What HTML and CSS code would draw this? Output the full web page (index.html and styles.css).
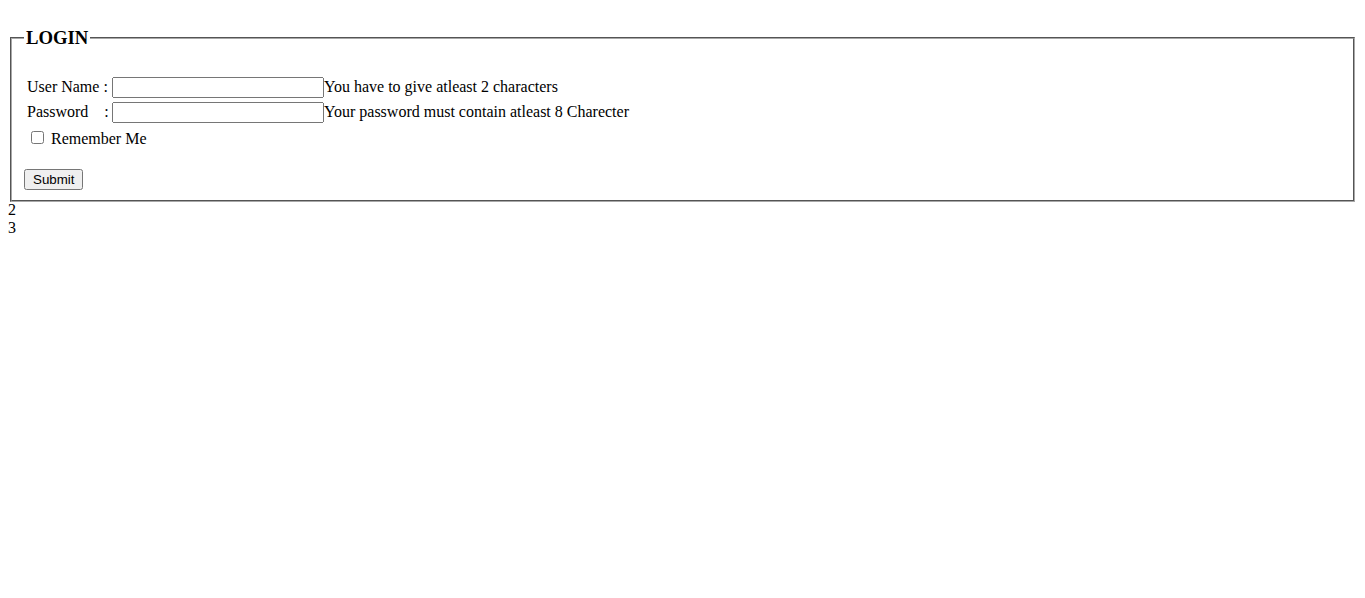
FILE: index.html
```html
<!DOCTYPE html>
<html>
<head>
<meta charset="utf-8">
<link rel="stylesheet" href="styles.css">
</head>
<body>
<form class="login-form">
<fieldset class="login">
<legend class="login-legend"><h3 class="login-title">LOGIN</h3></legend>
<table class="login-table">
<tr><td><span class="label">User Name :</span><input type="text" class="field">You have to give atleast 2 characters</td></tr>
<tr><td><span class="label">Password &nbsp;&nbsp;&nbsp;:</span><input type="password" class="field">Your password must contain atleast 8 Charecter</td></tr>
<tr><td class="check-cell"><input type="checkbox" class="check"> Remember Me</td></tr>
</table>
<div class="actions"><input type="submit" value="Submit" class="submit"></div>
</fieldset>
</form>
<div class="after">2<br>3</div>
</body>
</html>
```
FILE: styles.css
```css
body {
  font-family: "Liberation Serif", "Times New Roman", serif;
  font-size: 16px;
}
.login-form {
  margin: 0;
}
.login {
  border: 2px groove #a8a8a8;
  padding-bottom: 10px;
}
.login-title {
  font-size: 18.72px;
}
.login-table {
  margin-top: 1px;
}
.label {
  display: inline-block;
  width: 85px;
  white-space: pre;
}
.field {
  width: 212px;
  box-sizing: border-box;
  font-family: "Liberation Sans", Arial, sans-serif;
  font-size: 13.333px;
}
.check-cell {
  padding-top: 2px;
}
.check {
  width: 13px;
  height: 13px;
}
.actions {
  margin-top: 18px;
}
.submit {
  display: block;
  height: 21px;
  padding: 1px 7px;
  font-family: "Liberation Sans", Arial, sans-serif;
  font-size: 13.333px;
}
.after {
  margin-top: 0;
  margin-top: -1px;
}
```
